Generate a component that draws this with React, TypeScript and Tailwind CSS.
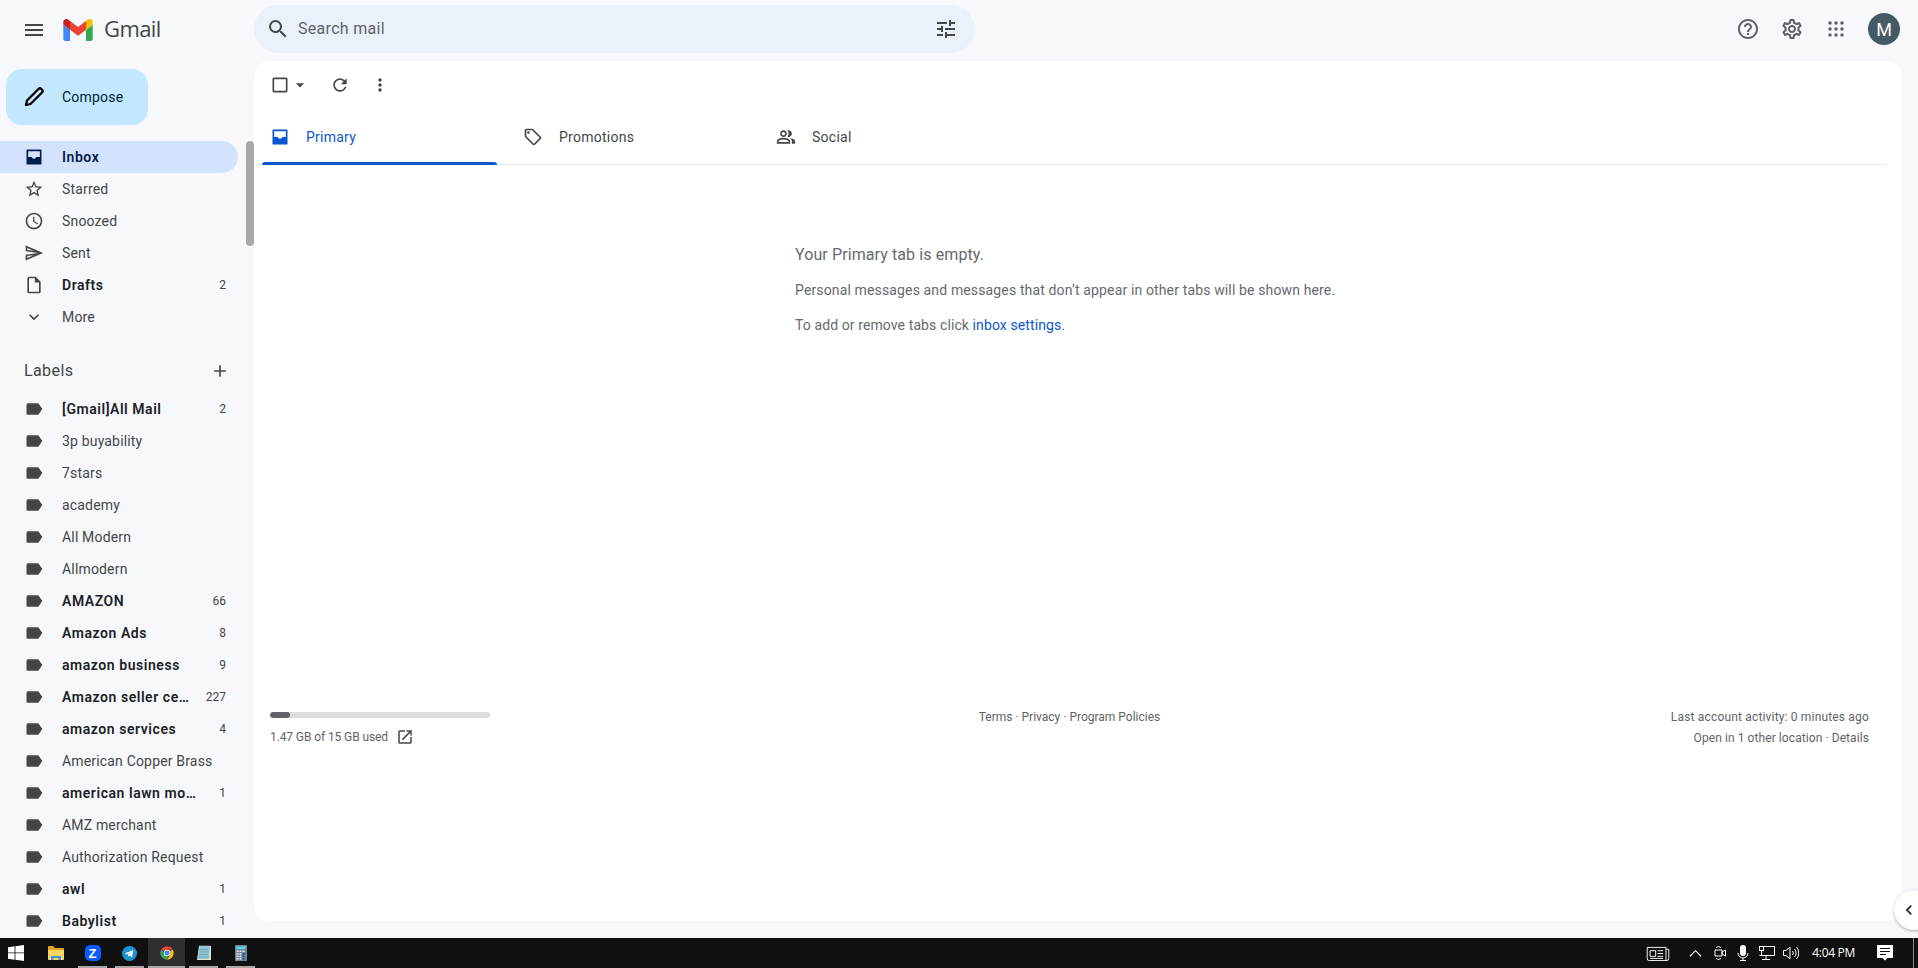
import {
  MdAdd,
  MdArrowDropDown,
  MdCheckBoxOutlineBlank,
  MdChevronLeft,
  MdExpandMore,
  MdHelpOutline,
  MdLabel,
  MdMenu,
  MdMoreVert,
  MdOpenInNew,
  MdOutlineAccessTime,
  MdOutlineInsertDriveFile,
  MdOutlineLocalOffer,
  MdOutlinePeopleAlt,
  MdOutlineSend,
  MdOutlineSettings,
  MdRefresh,
  MdSearch,
  MdStarBorder,
  MdTune,
} from "react-icons/md";

const labels = [
  { name: "[Gmail]All Mail", count: "2", bold: true },
  { name: "3p buyability" },
  { name: "7stars" },
  { name: "academy" },
  { name: "All Modern" },
  { name: "Allmodern" },
  { name: "AMAZON", count: "66", bold: true },
  { name: "Amazon Ads", count: "8", bold: true },
  { name: "amazon business", count: "9", bold: true },
  { name: "Amazon seller central", count: "227", bold: true },
  { name: "amazon services", count: "4", bold: true },
  { name: "American Copper Brass" },
  { name: "american lawn mower", count: "1", bold: true },
  { name: "AMZ merchant" },
  { name: "Authorization Request" },
  { name: "awl", count: "1", bold: true },
  { name: "Babylist", count: "1", bold: true },
];

function GmailLogo() {
  return (
    <svg viewBox="52 42 88 66" className="h-[22px] w-[30px]">
      <path fill="#4285f4" d="M58 108h14V74L52 59v43c0 3.32 2.69 6 6 6" />
      <path fill="#34a853" d="M120 108h14c3.32 0 6-2.69 6-6V59l-20 15" />
      <path fill="#fbbc04" d="M120 48v26l20-15v-8c0-7.42-8.47-11.65-14.4-7.2" />
      <path fill="#ea4335" d="M72 74V48l24 18 24-18v26L96 92" />
      <path fill="#c5221f" d="M52 51v8l20 15V48l-5.6-4.2c-5.94-4.45-14.4-.22-14.4 7.2" />
    </svg>
  );
}

function AppsGrid() {
  return (
    <svg viewBox="0 0 16 16" className="h-4 w-4" fill="#5f6368">
      {[2, 8, 14].map((y) =>
        [2, 8, 14].map((x) => <circle key={`${x}-${y}`} cx={x} cy={y} r="1.8" />),
      )}
    </svg>
  );
}

// filled inbox tray, the package's one has too thin a frame
function InboxIcon({ className }: { className?: string }) {
  return (
    <svg viewBox="0 0 24 24" width="20" height="20" fill="currentColor" className={className}>
      <path
        fillRule="evenodd"
        d="M4 3h16a1 1 0 0 1 1 1v16a1 1 0 0 1-1 1H4a1 1 0 0 1-1-1V4a1 1 0 0 1 1-1zm1 2v7h4.2c.3 1 1.3 2 2.8 2s2.5-1 2.8-2H19V5z"
      />
    </svg>
  );
}

function PencilIcon() {
  return (
    <svg viewBox="0 0 24 24" className="h-6 w-6" fill="none" stroke="#000" strokeWidth="2.3" strokeLinejoin="round">
      <path d="M4 20l1-4.5L16.5 4a2 2 0 0 1 2.8 0l.7.7a2 2 0 0 1 0 2.8L8.5 19z" />
    </svg>
  );
}

function TopBar() {
  return (
    <header className="flex h-[61px] shrink-0 items-start">
      <div className="flex w-[254px] shrink-0 items-center pt-[18px]">
        <MdMenu className="ml-[22px] text-[24px] text-[#444746]" />
        <div className="ml-[17px]">
          <GmailLogo />
        </div>
        <span className="ml-[11px] -mt-[4px] font-['Open_Sans',sans-serif] text-[22px] leading-[22px] tracking-[-0.6px] text-[#444746]">
          Gmail
        </span>
      </div>
      <div className="mt-[5px] flex h-12 w-[721px] items-center rounded-full bg-[#eaf1fb] pl-[12px] pr-[17px]">
        <MdSearch className="text-[24px] text-[#444746]" />
        <span className="ml-[8px] flex-1 text-[16px] tracking-[0.3px] text-[#5f6368]">Search mail</span>
        <MdTune className="text-[24px] text-[#444746]" />
      </div>
      <div className="ml-auto flex items-center pr-[18px] pt-[13px]">
        <div className="flex w-[44px] justify-center">
          <MdHelpOutline className="text-[24px] text-[#5f6368]" />
        </div>
        <div className="flex w-[44px] justify-center">
          <MdOutlineSettings className="text-[24px] text-[#5f6368]" />
        </div>
        <div className="flex w-[44px] justify-center">
          <AppsGrid />
        </div>
        <div className="ml-[10px] flex h-8 w-8 items-center justify-center rounded-full bg-[#455a64] text-[18px] text-white">
          M
        </div>
      </div>
    </header>
  );
}

function NavRow({
  icon,
  name,
  count,
  bold,
  active,
}: {
  icon: React.ReactNode;
  name: string;
  count?: string;
  bold?: boolean;
  active?: boolean;
}) {
  return (
    <div
      className={`flex h-8 w-[238px] shrink-0 items-center rounded-r-full pl-[24px] pr-[12px] text-[14px] ${
        active
          ? "bg-[#d3e3fd] font-semibold tracking-[0.55px] text-[#041e49]"
          : bold
            ? "font-semibold tracking-[0.55px] text-[#202124]"
            : "tracking-[0.17px] text-[#444746]"
      }`}
    >
      <span className="flex w-[20px] shrink-0 justify-center text-[20px]">{icon}</span>
      <span className="ml-[18px] min-w-0 flex-1 truncate">{name}</span>
      {count && <span className="ml-[15px] text-[12px] font-normal tracking-normal text-[#444746]">{count}</span>}
    </div>
  );
}

function Sidebar() {
  return (
    <aside className="relative h-full w-[254px] shrink-0 overflow-hidden">
      <div className="ml-[6px] mt-[8px] flex h-14 w-[142px] items-center rounded-2xl bg-[#c2e7ff] pl-[16px] text-[14px] tracking-[0.2px] text-[#001d35]">
        <PencilIcon />
        <span className="ml-[16px]">Compose</span>
      </div>
      <nav className="mt-4 flex flex-col">
        <NavRow active name="Inbox" icon={<InboxIcon className="text-[#041e49]" />} />
        <NavRow name="Starred" icon={<MdStarBorder />} />
        <NavRow name="Snoozed" icon={<MdOutlineAccessTime />} />
        <NavRow name="Sent" icon={<MdOutlineSend />} />
        <NavRow bold name="Drafts" count="2" icon={<MdOutlineInsertDriveFile className="text-[#444746]" />} />
        <NavRow name="More" icon={<MdExpandMore />} />
      </nav>
      <div className="flex h-[60px] w-[238px] items-center justify-between pl-[24px] pr-[8px] pt-[15px]">
        <span className="text-[16px] tracking-[0.4px] text-[#444746]">Labels</span>
        <MdAdd className="text-[20px] text-[#444746]" />
      </div>
      <div className="flex flex-col">
        {labels.map((l) => (
          <NavRow key={l.name} name={l.name} count={l.count} bold={l.bold} icon={<MdLabel className="text-[#444746]" />} />
        ))}
      </div>
      <div className="absolute right-0 top-[80px] h-[105px] w-2 rounded-full bg-[#a6a9ab]" />
    </aside>
  );
}

function Tab({ icon, name, active }: { icon: React.ReactNode; name: string; active?: boolean }) {
  return (
    <div
      className={`relative flex h-14 w-[253px] items-center pl-[8px] text-[14px] tracking-[0.25px] ${
        active ? "text-[#0b57d0]" : "text-[#444746]"
      }`}
    >
      <span className="flex w-[20px] justify-center text-[20px]">{icon}</span>
      <span className="ml-[16px]">{name}</span>
      {active && <div className="absolute bottom-0 left-0 h-[3px] w-[235px] rounded-t-[3px] bg-[#0b57d0]" />}
    </div>
  );
}

function MainCard() {
  return (
    <main className="mb-[17px] mr-[16px] flex flex-1 flex-col rounded-2xl bg-white">
      <div className="flex h-12 shrink-0 items-center pl-4 text-[#444746]">
        <MdCheckBoxOutlineBlank className="text-[20px]" />
        <MdArrowDropDown className="text-[20px]" />
        <MdRefresh className="ml-[20px] text-[20px]" />
        <MdMoreVert className="ml-[20px] text-[20px]" />
      </div>
      <div className="mr-4 flex h-[56px] shrink-0 border-b border-[#e8eaed] pl-2">
        <Tab active name="Primary" icon={<InboxIcon />} />
        <Tab name="Promotions" icon={<MdOutlineLocalOffer />} />
        <Tab name="Social" icon={<MdOutlinePeopleAlt />} />
      </div>
      <div className="ml-[541px] mt-[78px] h-[469px] shrink-0 text-[#666a6e]">
        <p className="text-[16px] leading-6 tracking-[0.1px]">Your Primary tab is empty.</p>
        <p className="mt-[13px] text-[14px] leading-5 tracking-[0.14px]">
          Personal messages and messages that don’t appear in other tabs will be shown here.
        </p>
        <p className="mt-[15px] text-[14px] leading-5 tracking-[0.1px]">
          To add or remove tabs click <span className="text-[#0b57d0]">inbox settings</span>.
        </p>
      </div>
      <Footer />
    </main>
  );
}

function Footer() {
  return (
    <footer className="grid grid-cols-3 pl-4 pr-[33px] text-[12px] text-[#5f6368]">
      <div>
        <div className="h-[6px] w-[220px] overflow-hidden rounded-full bg-[#dadce0]">
          <div className="h-full w-[20px] rounded-full bg-[#5f6368]" />
        </div>
        <div className="mt-[9px] flex items-center leading-5 tracking-[-0.1px]">
          1.47 GB of 15 GB used
          <MdOpenInNew className="ml-[8px] text-[18px] text-[#444746]" />
        </div>
      </div>
      <div className="-mt-[5px] text-center leading-5">Terms · Privacy · Program Policies</div>
      <div className="-mt-[5px] text-right leading-[21px]">
        <div className="tracking-[0.17px]">Last account activity: 0 minutes ago</div>
        <div className="tracking-[0.08px]">Open in 1 other location · Details</div>
      </div>
    </footer>
  );
}

function WinLogo() {
  return (
    <svg viewBox="0 0 16 16" className="h-4 w-4" fill="#fff">
      <path d="M0 2.2 6.6 1.3V7.5H0zM7.4 1.2 16 0V7.5H7.4zM0 8.3H6.6V14.7L0 13.8zM7.4 8.3H16V16L7.4 14.8z" />
    </svg>
  );
}

function FolderIcon() {
  return (
    <svg viewBox="0 0 16 14" className="h-[14px] w-4">
      <path fill="#e0a526" d="M0 1.2C0 .5.4 0 1 0h4l2 2h8c.6 0 1 .4 1 1v2H0z" />
      <path fill="#fcd462" d="M0 4h16v9c0 .6-.4 1-1 1H1c-.6 0-1-.4-1-1z" />
      <path fill="#3f93d8" d="M3 14v-4h10v4h-2.5v-2h-5v2z" />
    </svg>
  );
}

function ZoomIcon() {
  return (
    <div className="flex h-4 w-4 items-center justify-center rounded-[5px] bg-[#0b5cff] font-['Liberation_Sans',sans-serif] text-[13px] font-bold leading-none text-white">
      Z
    </div>
  );
}

function TelegramIcon() {
  return (
    <svg viewBox="0 0 16 16" className="h-[15px] w-[15px]">
      <circle cx="8" cy="8" r="8" fill="#1c93d1" />
      <path fill="#fff" d="M3 8 12 4.2 10.7 12 8 10l-1.3 1.5-.3-2.4L10.6 5.8 5.3 9z" />
    </svg>
  );
}

function ChromeIcon() {
  return (
    <svg viewBox="0 0 48 48" className="h-4 w-4">
      <path fill="#ea4335" d="M24 4a20 20 0 0 1 17.3 10H24a10 10 0 0 0-9.4 6.6L7.6 12.4A20 20 0 0 1 24 4z" />
      <path fill="#fbbc04" d="M41.3 14A20 20 0 0 1 24 44l8.7-15A10 10 0 0 0 32 18z" />
      <path fill="#34a853" d="M7.6 12.4 16 28a10 10 0 0 0 11.6 5L24 44A20 20 0 0 1 7.6 12.4z" />
      <circle cx="24" cy="24" r="10" fill="#fff" />
      <circle cx="24" cy="24" r="7.6" fill="#4285f4" />
    </svg>
  );
}

function NotepadIcon() {
  return (
    <svg viewBox="0 0 16 16" className="h-4 w-4">
      <path fill="#e4e2cf" d="M3 1h12v14H1z" />
      <path fill="#8fc6d8" d="M3.5 1H14L13 14H1.5z" />
      <path stroke="#5b8fa3" strokeWidth=".6" d="M4 4.5h8.5M3.7 7h8.5M3.4 9.5h8.5M3.1 12h8.5" />
      <path stroke="#cfd8dc" strokeWidth=".8" strokeDasharray="1 1" d="M3.5 .8H14" />
    </svg>
  );
}

function CalcIcon() {
  return (
    <svg viewBox="0 0 12 16" className="h-4 w-3">
      <rect width="12" height="16" fill="#6e8494" />
      <rect x="1.5" y="1.5" width="9" height="2.5" fill="#5fd3ea" />
      {[5.5, 8, 10.5, 13].map((y) =>
        [1.5, 4.5, 7.5].map((x) => (
          <rect key={`${x}-${y}`} x={x} y={y} width="2" height="1.6" fill={x === 7.5 && y > 7 ? "#1d4f91" : "#dfe6ea"} />
        )),
      )}
    </svg>
  );
}

function TaskItem({ children, running, active }: { children: React.ReactNode; running?: boolean; active?: boolean }) {
  return (
    <div className={`relative flex h-[30px] w-[37px] items-center justify-center ${active ? "bg-[#2f2f2f]" : ""}`}>
      {children}
      {running && (
        <div className={`absolute bottom-0 h-[2px] bg-[#a8a8a8] ${active ? "inset-x-0" : "inset-x-[4px]"}`} />
      )}
    </div>
  );
}

function Taskbar() {
  return (
    <footer className="flex h-[30px] shrink-0 items-center bg-[#101010]">
      <div className="flex w-[37px] justify-center pr-[5px]">
        <WinLogo />
      </div>
      <TaskItem>
        <FolderIcon />
      </TaskItem>
      <TaskItem running>
        <ZoomIcon />
      </TaskItem>
      <TaskItem running>
        <TelegramIcon />
      </TaskItem>
      <TaskItem running active>
        <ChromeIcon />
      </TaskItem>
      <TaskItem running>
        <NotepadIcon />
      </TaskItem>
      <TaskItem running>
        <CalcIcon />
      </TaskItem>
      <div className="ml-auto flex items-center text-white">
        <svg viewBox="0 0 24 16" className="h-[15px] w-[24px]" fill="none" stroke="#fff" strokeWidth="1">
          <path d="M.5 1.5h20v14H2.5a2 2 0 0 1-2-2zM20.5 3.5h3v10a2 2 0 0 1-2 2h-1" />
          <path d="M3.5 5h6v6h-6zM11.5 5h6M11.5 8h6M11.5 11h6M3.5 13.2h14" />
        </svg>
        <svg viewBox="0 0 14 8" className="ml-[19px] h-2 w-[13px]" fill="none" stroke="#fff" strokeWidth="1.2">
          <path d="M1 7.5 7 1.5l6 6" />
        </svg>
        <svg viewBox="0 0 12 16" className="ml-[12px] h-4 w-3" fill="none" stroke="#fff" strokeWidth="1">
          <path d="M1 5h7v6H1zM8 7l3.5-2v6L8 9zM2 2.5Q4.5.5 7 2.5M2 13.5Q4.5 15.5 7 13.5" />
        </svg>
        <svg viewBox="0 0 12 16" className="ml-[11px] h-4 w-3">
          <rect x="3" y="0" width="6" height="11" rx="3" fill="#fff" />
          <path d="M1 8a5 5 0 0 0 10 0M6 13v2M3 15.5h6" fill="none" stroke="#fff" />
        </svg>
        <svg viewBox="0 0 16 14" className="ml-[10px] h-[14px] w-4" fill="none" stroke="#fff" strokeWidth="1">
          <path d="M5 .5h10.5v9H.5M7 9.5v3.5M3 13.5h8" />
          <rect x=".5" y=".5" width="4" height="4" />
          <path d="M2.5 4.5v5" />
        </svg>
        <svg viewBox="0 0 16 14" className="ml-[8px] h-[14px] w-4" fill="none" stroke="#fff" strokeWidth="1">
          <path d="M.5 4.5h2.5L7 1v12L3 9.5H.5zM9.5 5a3 3 0 0 1 0 4M11.5 3a6 6 0 0 1 0 8M13.5 1a9 9 0 0 1 0 12" />
        </svg>
        <span className="ml-[13px] font-['Open_Sans',sans-serif] text-[12px] tracking-[-0.3px] text-white">4:04 PM</span>
        <svg viewBox="0 0 16 16" className="ml-[22px] h-4 w-4" fill="#fff">
          <path d="M0 0h16v13h-5.5L8 15.5 5.5 13H0z" />
          <path stroke="#101010" d="M3 3.5h10M3 6.5h10M3 9.5h6" />
        </svg>
        <div className="ml-[20px] h-[30px] w-px bg-[#8a8a8a]" />
        <div className="w-[4px]" />
      </div>
    </footer>
  );
}

export default function App() {
  return (
    <div className="relative flex h-[968px] w-[1918px] flex-col overflow-hidden bg-[#f6f8fc] font-['Roboto',sans-serif]">
      <TopBar />
      <div className="flex min-h-0 flex-1">
        <Sidebar />
        <MainCard />
      </div>
      <Taskbar />
      {/* side panel toggle, half off the page */}
      <div className="absolute left-[1894px] top-[890px] flex h-10 w-10 items-center rounded-full bg-white pl-[5px] shadow-[0_1px_3px_rgba(60,64,67,0.4)]">
        <MdChevronLeft className="text-[20px] text-[#202124]" />
      </div>
    </div>
  );
}
